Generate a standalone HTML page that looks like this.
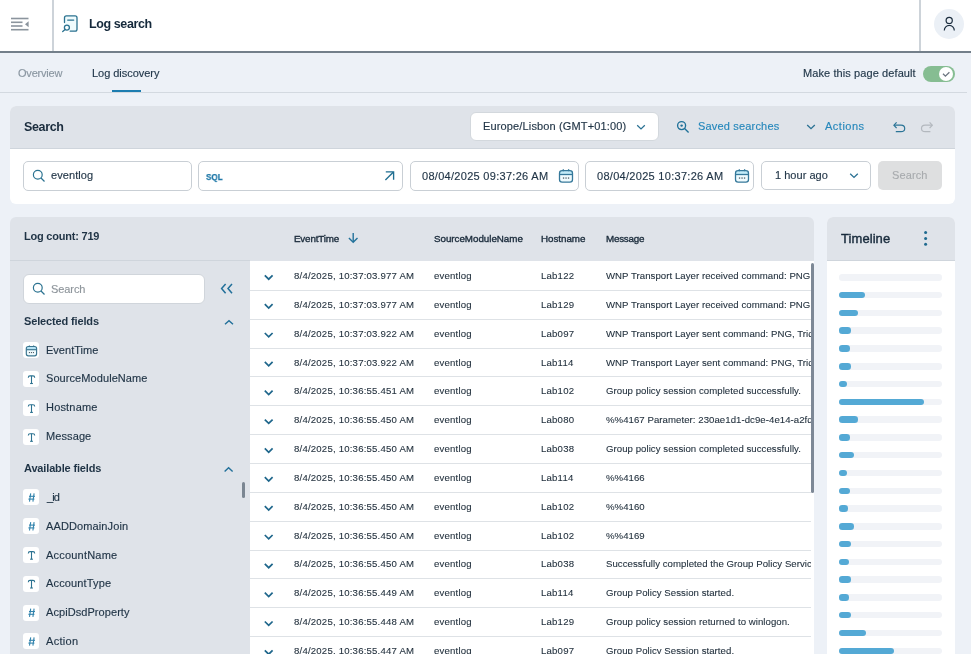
<!DOCTYPE html>
<html><head><meta charset="utf-8">
<style>
*{box-sizing:border-box;margin:0;padding:0}
html,body{width:971px;height:654px;overflow:hidden}
body{background:#edf1f7;font-family:"Liberation Sans",sans-serif;color:#1f3345;position:relative}
.a{position:absolute}
.t{position:absolute;white-space:nowrap;line-height:1;will-change:transform}
svg{position:absolute;left:0;top:0;overflow:visible}
</style></head><body>

<div class="a" style="left:0;top:0;width:971px;height:51px;background:#fff"></div>
<div class="a" style="left:0;top:51px;width:971px;height:2px;background:#737f8a"></div>
<div class="a" style="left:52px;top:0;width:2px;height:51px;background:#cdd3d9"></div>
<div class="a" style="left:919px;top:0;width:2px;height:51px;background:#cdd3d9"></div>
<div class="a" style="left:934px;top:9px;width:30px;height:30px;border-radius:50%;background:#ebf0f6"></div>
<div class="a" style="left:112px;top:90px;width:29px;height:2px;background:#1d7db0"></div>
<div class="a" style="left:0;top:92px;width:967px;height:1px;background:#d3d9e0"></div>
<div class="a" style="left:923px;top:66px;width:32px;height:16px;border-radius:8px;background:#86bd92"></div>
<div class="a" style="left:939px;top:67px;width:14px;height:14px;border-radius:50%;background:#fff"></div>
<div class="a" style="left:10px;top:106px;width:945px;height:98px;border-radius:6px;background:#fff;overflow:hidden"><div class="a" style="left:0;top:0;width:945px;height:43px;background:#dfe3e9;border-bottom:1px solid #cfd5dc"></div></div>
<div class="a" style="left:470px;top:112px;width:189px;height:29px;border-radius:6px;background:#fff;border:1px solid #d3d8dd"></div>
<div class="a" style="left:23px;top:161px;width:169px;height:30px;border:1px solid #c9cfd5;border-radius:5px"></div>
<div class="a" style="left:198px;top:161px;width:205px;height:30px;border:1px solid #c9cfd5;border-radius:5px"></div>
<div class="a" style="left:410px;top:161px;width:169px;height:30px;border:1px solid #c9cfd5;border-radius:5px"></div>
<div class="a" style="left:585px;top:161px;width:169px;height:30px;border:1px solid #c9cfd5;border-radius:5px"></div>
<div class="a" style="left:761px;top:161px;width:110px;height:29px;border:1px solid #c9cfd5;border-radius:5px"></div>
<div class="a" style="left:878px;top:161px;width:64px;height:29px;border-radius:5px;background:#dedfe0"></div>
<div class="a" style="left:10px;top:217px;width:804px;height:460px;border-radius:6px;background:#dfe3e9;overflow:hidden"><div class="a" style="left:0;top:43px;width:240px;height:1px;background:#cfd5dc"></div><div class="a" style="left:240px;top:44px;width:564px;height:420px;background:#fff"></div></div>
<div class="a" style="left:827px;top:217px;width:128px;height:460px;border-radius:6px;background:#fff;overflow:hidden"><div class="a" style="left:0;top:0;width:128px;height:44px;background:#dfe3e9;border-bottom:1px solid #cfd5dc"></div></div>
<div class="a" style="left:23px;top:274px;width:182px;height:30px;border-radius:6px;background:#fff;border:1px solid #d0d5db"></div>
<div class="a" style="left:23px;top:342.4px;width:16px;height:16px;border-radius:3px;background:#fff"></div>
<div class="a" style="left:23px;top:371.3px;width:16px;height:16px;border-radius:3px;background:#fff"></div>
<div class="a" style="left:23px;top:400.2px;width:16px;height:16px;border-radius:3px;background:#fff"></div>
<div class="a" style="left:23px;top:429.1px;width:16px;height:16px;border-radius:3px;background:#fff"></div>
<div class="a" style="left:23px;top:489.4px;width:16px;height:16px;border-radius:3px;background:#fff"></div>
<div class="a" style="left:23px;top:518.2px;width:16px;height:16px;border-radius:3px;background:#fff"></div>
<div class="a" style="left:23px;top:547.0px;width:16px;height:16px;border-radius:3px;background:#fff"></div>
<div class="a" style="left:23px;top:575.8px;width:16px;height:16px;border-radius:3px;background:#fff"></div>
<div class="a" style="left:23px;top:604.6px;width:16px;height:16px;border-radius:3px;background:#fff"></div>
<div class="a" style="left:23px;top:633.4px;width:16px;height:16px;border-radius:3px;background:#fff"></div>
<div class="a" style="left:242px;top:482px;width:3px;height:16px;border-radius:1.5px;background:#7b8692"></div>
<div class="a" style="left:250px;top:261px;width:561px;height:400px;overflow:hidden">
<div class="a" style="left:0;top:28.85px;width:561px;height:1px;background:#dee2e6"></div>
<div class="t" style="left:43.70px;top:9.97px;font-size:9.6px;letter-spacing:0.2px;color:#24323f;-webkit-text-stroke:0.1px #24323f">8/4/2025, 10:37:03.977 AM</div>
<div class="t" style="left:183.60px;top:9.97px;font-size:9.6px;letter-spacing:0.2px;color:#24323f;-webkit-text-stroke:0.1px #24323f">eventlog</div>
<div class="t" style="left:291.00px;top:9.97px;font-size:9.6px;letter-spacing:0.2px;color:#24323f;-webkit-text-stroke:0.1px #24323f">Lab122</div>
<div class="t" style="left:355.80px;top:9.97px;font-size:9.6px;letter-spacing:0.06px;color:#24323f;-webkit-text-stroke:0.1px #24323f">WNP Transport Layer received command: PNG, Trident 2</div>
<div class="a" style="left:0;top:57.70px;width:561px;height:1px;background:#dee2e6"></div>
<div class="t" style="left:43.70px;top:38.82px;font-size:9.6px;letter-spacing:0.2px;color:#24323f;-webkit-text-stroke:0.1px #24323f">8/4/2025, 10:37:03.977 AM</div>
<div class="t" style="left:183.60px;top:38.82px;font-size:9.6px;letter-spacing:0.2px;color:#24323f;-webkit-text-stroke:0.1px #24323f">eventlog</div>
<div class="t" style="left:291.00px;top:38.82px;font-size:9.6px;letter-spacing:0.2px;color:#24323f;-webkit-text-stroke:0.1px #24323f">Lab129</div>
<div class="t" style="left:355.80px;top:38.82px;font-size:9.6px;letter-spacing:0.06px;color:#24323f;-webkit-text-stroke:0.1px #24323f">WNP Transport Layer received command: PNG, Trident 2</div>
<div class="a" style="left:0;top:86.55px;width:561px;height:1px;background:#dee2e6"></div>
<div class="t" style="left:43.70px;top:67.67px;font-size:9.6px;letter-spacing:0.2px;color:#24323f;-webkit-text-stroke:0.1px #24323f">8/4/2025, 10:37:03.922 AM</div>
<div class="t" style="left:183.60px;top:67.67px;font-size:9.6px;letter-spacing:0.2px;color:#24323f;-webkit-text-stroke:0.1px #24323f">eventlog</div>
<div class="t" style="left:291.00px;top:67.67px;font-size:9.6px;letter-spacing:0.2px;color:#24323f;-webkit-text-stroke:0.1px #24323f">Lab097</div>
<div class="t" style="left:355.80px;top:67.67px;font-size:9.6px;letter-spacing:0.06px;color:#24323f;-webkit-text-stroke:0.1px #24323f">WNP Transport Layer sent command: PNG, Trident 2</div>
<div class="a" style="left:0;top:115.40px;width:561px;height:1px;background:#dee2e6"></div>
<div class="t" style="left:43.70px;top:96.52px;font-size:9.6px;letter-spacing:0.2px;color:#24323f;-webkit-text-stroke:0.1px #24323f">8/4/2025, 10:37:03.922 AM</div>
<div class="t" style="left:183.60px;top:96.52px;font-size:9.6px;letter-spacing:0.2px;color:#24323f;-webkit-text-stroke:0.1px #24323f">eventlog</div>
<div class="t" style="left:291.00px;top:96.52px;font-size:9.6px;letter-spacing:0.2px;color:#24323f;-webkit-text-stroke:0.1px #24323f">Lab114</div>
<div class="t" style="left:355.80px;top:96.52px;font-size:9.6px;letter-spacing:0.06px;color:#24323f;-webkit-text-stroke:0.1px #24323f">WNP Transport Layer sent command: PNG, Trident 2</div>
<div class="a" style="left:0;top:144.25px;width:561px;height:1px;background:#dee2e6"></div>
<div class="t" style="left:43.70px;top:125.37px;font-size:9.6px;letter-spacing:0.2px;color:#24323f;-webkit-text-stroke:0.1px #24323f">8/4/2025, 10:36:55.451 AM</div>
<div class="t" style="left:183.60px;top:125.37px;font-size:9.6px;letter-spacing:0.2px;color:#24323f;-webkit-text-stroke:0.1px #24323f">eventlog</div>
<div class="t" style="left:291.00px;top:125.37px;font-size:9.6px;letter-spacing:0.2px;color:#24323f;-webkit-text-stroke:0.1px #24323f">Lab102</div>
<div class="t" style="left:355.80px;top:125.37px;font-size:9.6px;letter-spacing:0.06px;color:#24323f;-webkit-text-stroke:0.1px #24323f">Group policy session completed successfully.</div>
<div class="a" style="left:0;top:173.10px;width:561px;height:1px;background:#dee2e6"></div>
<div class="t" style="left:43.70px;top:154.22px;font-size:9.6px;letter-spacing:0.2px;color:#24323f;-webkit-text-stroke:0.1px #24323f">8/4/2025, 10:36:55.450 AM</div>
<div class="t" style="left:183.60px;top:154.22px;font-size:9.6px;letter-spacing:0.2px;color:#24323f;-webkit-text-stroke:0.1px #24323f">eventlog</div>
<div class="t" style="left:291.00px;top:154.22px;font-size:9.6px;letter-spacing:0.2px;color:#24323f;-webkit-text-stroke:0.1px #24323f">Lab080</div>
<div class="t" style="left:355.80px;top:154.22px;font-size:9.6px;letter-spacing:0.06px;color:#24323f;-webkit-text-stroke:0.1px #24323f">%%4167 Parameter: 230ae1d1-dc9e-4e14-a2fd-0b1c2d3e</div>
<div class="a" style="left:0;top:201.95px;width:561px;height:1px;background:#dee2e6"></div>
<div class="t" style="left:43.70px;top:183.07px;font-size:9.6px;letter-spacing:0.2px;color:#24323f;-webkit-text-stroke:0.1px #24323f">8/4/2025, 10:36:55.450 AM</div>
<div class="t" style="left:183.60px;top:183.07px;font-size:9.6px;letter-spacing:0.2px;color:#24323f;-webkit-text-stroke:0.1px #24323f">eventlog</div>
<div class="t" style="left:291.00px;top:183.07px;font-size:9.6px;letter-spacing:0.2px;color:#24323f;-webkit-text-stroke:0.1px #24323f">Lab038</div>
<div class="t" style="left:355.80px;top:183.07px;font-size:9.6px;letter-spacing:0.06px;color:#24323f;-webkit-text-stroke:0.1px #24323f">Group policy session completed successfully.</div>
<div class="a" style="left:0;top:230.80px;width:561px;height:1px;background:#dee2e6"></div>
<div class="t" style="left:43.70px;top:211.92px;font-size:9.6px;letter-spacing:0.2px;color:#24323f;-webkit-text-stroke:0.1px #24323f">8/4/2025, 10:36:55.450 AM</div>
<div class="t" style="left:183.60px;top:211.92px;font-size:9.6px;letter-spacing:0.2px;color:#24323f;-webkit-text-stroke:0.1px #24323f">eventlog</div>
<div class="t" style="left:291.00px;top:211.92px;font-size:9.6px;letter-spacing:0.2px;color:#24323f;-webkit-text-stroke:0.1px #24323f">Lab114</div>
<div class="t" style="left:355.80px;top:211.92px;font-size:9.6px;letter-spacing:0.06px;color:#24323f;-webkit-text-stroke:0.1px #24323f">%%4166</div>
<div class="a" style="left:0;top:259.65px;width:561px;height:1px;background:#dee2e6"></div>
<div class="t" style="left:43.70px;top:240.77px;font-size:9.6px;letter-spacing:0.2px;color:#24323f;-webkit-text-stroke:0.1px #24323f">8/4/2025, 10:36:55.450 AM</div>
<div class="t" style="left:183.60px;top:240.77px;font-size:9.6px;letter-spacing:0.2px;color:#24323f;-webkit-text-stroke:0.1px #24323f">eventlog</div>
<div class="t" style="left:291.00px;top:240.77px;font-size:9.6px;letter-spacing:0.2px;color:#24323f;-webkit-text-stroke:0.1px #24323f">Lab102</div>
<div class="t" style="left:355.80px;top:240.77px;font-size:9.6px;letter-spacing:0.06px;color:#24323f;-webkit-text-stroke:0.1px #24323f">%%4160</div>
<div class="a" style="left:0;top:288.50px;width:561px;height:1px;background:#dee2e6"></div>
<div class="t" style="left:43.70px;top:269.62px;font-size:9.6px;letter-spacing:0.2px;color:#24323f;-webkit-text-stroke:0.1px #24323f">8/4/2025, 10:36:55.450 AM</div>
<div class="t" style="left:183.60px;top:269.62px;font-size:9.6px;letter-spacing:0.2px;color:#24323f;-webkit-text-stroke:0.1px #24323f">eventlog</div>
<div class="t" style="left:291.00px;top:269.62px;font-size:9.6px;letter-spacing:0.2px;color:#24323f;-webkit-text-stroke:0.1px #24323f">Lab102</div>
<div class="t" style="left:355.80px;top:269.62px;font-size:9.6px;letter-spacing:0.06px;color:#24323f;-webkit-text-stroke:0.1px #24323f">%%4169</div>
<div class="a" style="left:0;top:317.35px;width:561px;height:1px;background:#dee2e6"></div>
<div class="t" style="left:43.70px;top:298.47px;font-size:9.6px;letter-spacing:0.2px;color:#24323f;-webkit-text-stroke:0.1px #24323f">8/4/2025, 10:36:55.450 AM</div>
<div class="t" style="left:183.60px;top:298.47px;font-size:9.6px;letter-spacing:0.2px;color:#24323f;-webkit-text-stroke:0.1px #24323f">eventlog</div>
<div class="t" style="left:291.00px;top:298.47px;font-size:9.6px;letter-spacing:0.2px;color:#24323f;-webkit-text-stroke:0.1px #24323f">Lab038</div>
<div class="t" style="left:355.80px;top:298.47px;font-size:9.6px;letter-spacing:0.06px;color:#24323f;-webkit-text-stroke:0.1px #24323f">Successfully completed the Group Policy Service</div>
<div class="a" style="left:0;top:346.20px;width:561px;height:1px;background:#dee2e6"></div>
<div class="t" style="left:43.70px;top:327.32px;font-size:9.6px;letter-spacing:0.2px;color:#24323f;-webkit-text-stroke:0.1px #24323f">8/4/2025, 10:36:55.449 AM</div>
<div class="t" style="left:183.60px;top:327.32px;font-size:9.6px;letter-spacing:0.2px;color:#24323f;-webkit-text-stroke:0.1px #24323f">eventlog</div>
<div class="t" style="left:291.00px;top:327.32px;font-size:9.6px;letter-spacing:0.2px;color:#24323f;-webkit-text-stroke:0.1px #24323f">Lab114</div>
<div class="t" style="left:355.80px;top:327.32px;font-size:9.6px;letter-spacing:0.06px;color:#24323f;-webkit-text-stroke:0.1px #24323f">Group Policy Session started.</div>
<div class="a" style="left:0;top:375.05px;width:561px;height:1px;background:#dee2e6"></div>
<div class="t" style="left:43.70px;top:356.17px;font-size:9.6px;letter-spacing:0.2px;color:#24323f;-webkit-text-stroke:0.1px #24323f">8/4/2025, 10:36:55.448 AM</div>
<div class="t" style="left:183.60px;top:356.17px;font-size:9.6px;letter-spacing:0.2px;color:#24323f;-webkit-text-stroke:0.1px #24323f">eventlog</div>
<div class="t" style="left:291.00px;top:356.17px;font-size:9.6px;letter-spacing:0.2px;color:#24323f;-webkit-text-stroke:0.1px #24323f">Lab129</div>
<div class="t" style="left:355.80px;top:356.17px;font-size:9.6px;letter-spacing:0.06px;color:#24323f;-webkit-text-stroke:0.1px #24323f">Group policy session returned to winlogon.</div>
<div class="a" style="left:0;top:403.90px;width:561px;height:1px;background:#dee2e6"></div>
<div class="t" style="left:43.70px;top:385.02px;font-size:9.6px;letter-spacing:0.2px;color:#24323f;-webkit-text-stroke:0.1px #24323f">8/4/2025, 10:36:55.447 AM</div>
<div class="t" style="left:183.60px;top:385.02px;font-size:9.6px;letter-spacing:0.2px;color:#24323f;-webkit-text-stroke:0.1px #24323f">eventlog</div>
<div class="t" style="left:291.00px;top:385.02px;font-size:9.6px;letter-spacing:0.2px;color:#24323f;-webkit-text-stroke:0.1px #24323f">Lab097</div>
<div class="t" style="left:355.80px;top:385.02px;font-size:9.6px;letter-spacing:0.06px;color:#24323f;-webkit-text-stroke:0.1px #24323f">Group Policy Session started.</div>
</div>
<div class="a" style="left:811px;top:263px;width:3px;height:230px;border-radius:1.5px;background:#7d8896"></div>
<div class="a" style="left:839px;top:274.1px;width:103px;height:6.6px;border-radius:3.3px;background:#f1f3f7"></div>
<div class="a" style="left:839px;top:291.9px;width:103px;height:6.6px;border-radius:3.3px;background:#f1f3f7"></div>
<div class="a" style="left:839px;top:291.9px;width:26px;height:6.6px;border-radius:3.3px;background:#54a9d5"></div>
<div class="a" style="left:839px;top:309.7px;width:103px;height:6.6px;border-radius:3.3px;background:#f1f3f7"></div>
<div class="a" style="left:839px;top:309.7px;width:19px;height:6.6px;border-radius:3.3px;background:#54a9d5"></div>
<div class="a" style="left:839px;top:327.4px;width:103px;height:6.6px;border-radius:3.3px;background:#f1f3f7"></div>
<div class="a" style="left:839px;top:327.4px;width:12px;height:6.6px;border-radius:3.3px;background:#54a9d5"></div>
<div class="a" style="left:839px;top:345.2px;width:103px;height:6.6px;border-radius:3.3px;background:#f1f3f7"></div>
<div class="a" style="left:839px;top:345.2px;width:11px;height:6.6px;border-radius:3.3px;background:#54a9d5"></div>
<div class="a" style="left:839px;top:363.0px;width:103px;height:6.6px;border-radius:3.3px;background:#f1f3f7"></div>
<div class="a" style="left:839px;top:363.0px;width:12px;height:6.6px;border-radius:3.3px;background:#54a9d5"></div>
<div class="a" style="left:839px;top:380.8px;width:103px;height:6.6px;border-radius:3.3px;background:#f1f3f7"></div>
<div class="a" style="left:839px;top:380.8px;width:8px;height:6.6px;border-radius:3.3px;background:#54a9d5"></div>
<div class="a" style="left:839px;top:398.6px;width:103px;height:6.6px;border-radius:3.3px;background:#f1f3f7"></div>
<div class="a" style="left:839px;top:398.6px;width:85px;height:6.6px;border-radius:3.3px;background:#54a9d5"></div>
<div class="a" style="left:839px;top:416.3px;width:103px;height:6.6px;border-radius:3.3px;background:#f1f3f7"></div>
<div class="a" style="left:839px;top:416.3px;width:19px;height:6.6px;border-radius:3.3px;background:#54a9d5"></div>
<div class="a" style="left:839px;top:434.1px;width:103px;height:6.6px;border-radius:3.3px;background:#f1f3f7"></div>
<div class="a" style="left:839px;top:434.1px;width:11px;height:6.6px;border-radius:3.3px;background:#54a9d5"></div>
<div class="a" style="left:839px;top:451.9px;width:103px;height:6.6px;border-radius:3.3px;background:#f1f3f7"></div>
<div class="a" style="left:839px;top:451.9px;width:15px;height:6.6px;border-radius:3.3px;background:#54a9d5"></div>
<div class="a" style="left:839px;top:469.7px;width:103px;height:6.6px;border-radius:3.3px;background:#f1f3f7"></div>
<div class="a" style="left:839px;top:469.7px;width:8px;height:6.6px;border-radius:3.3px;background:#54a9d5"></div>
<div class="a" style="left:839px;top:487.5px;width:103px;height:6.6px;border-radius:3.3px;background:#f1f3f7"></div>
<div class="a" style="left:839px;top:487.5px;width:11px;height:6.6px;border-radius:3.3px;background:#54a9d5"></div>
<div class="a" style="left:839px;top:505.2px;width:103px;height:6.6px;border-radius:3.3px;background:#f1f3f7"></div>
<div class="a" style="left:839px;top:505.2px;width:9px;height:6.6px;border-radius:3.3px;background:#54a9d5"></div>
<div class="a" style="left:839px;top:523.0px;width:103px;height:6.6px;border-radius:3.3px;background:#f1f3f7"></div>
<div class="a" style="left:839px;top:523.0px;width:15px;height:6.6px;border-radius:3.3px;background:#54a9d5"></div>
<div class="a" style="left:839px;top:540.8px;width:103px;height:6.6px;border-radius:3.3px;background:#f1f3f7"></div>
<div class="a" style="left:839px;top:540.8px;width:12px;height:6.6px;border-radius:3.3px;background:#54a9d5"></div>
<div class="a" style="left:839px;top:558.6px;width:103px;height:6.6px;border-radius:3.3px;background:#f1f3f7"></div>
<div class="a" style="left:839px;top:558.6px;width:10px;height:6.6px;border-radius:3.3px;background:#54a9d5"></div>
<div class="a" style="left:839px;top:576.4px;width:103px;height:6.6px;border-radius:3.3px;background:#f1f3f7"></div>
<div class="a" style="left:839px;top:576.4px;width:12px;height:6.6px;border-radius:3.3px;background:#54a9d5"></div>
<div class="a" style="left:839px;top:594.1px;width:103px;height:6.6px;border-radius:3.3px;background:#f1f3f7"></div>
<div class="a" style="left:839px;top:594.1px;width:10px;height:6.6px;border-radius:3.3px;background:#54a9d5"></div>
<div class="a" style="left:839px;top:611.9px;width:103px;height:6.6px;border-radius:3.3px;background:#f1f3f7"></div>
<div class="a" style="left:839px;top:611.9px;width:12px;height:6.6px;border-radius:3.3px;background:#54a9d5"></div>
<div class="a" style="left:839px;top:629.7px;width:103px;height:6.6px;border-radius:3.3px;background:#f1f3f7"></div>
<div class="a" style="left:839px;top:629.7px;width:27px;height:6.6px;border-radius:3.3px;background:#54a9d5"></div>
<div class="a" style="left:839px;top:647.5px;width:103px;height:6.6px;border-radius:3.3px;background:#f1f3f7"></div>
<div class="a" style="left:839px;top:647.5px;width:55px;height:6.6px;border-radius:3.3px;background:#54a9d5"></div>
<div class="t" style="left:88.90px;top:18.02px;font-size:12.5px;color:#15293b;font-weight:700;letter-spacing:-0.395px">Log search</div>
<div class="t" style="left:18.10px;top:67.89px;font-size:11px;color:#8a96a1;-webkit-text-stroke:0.15px #8a96a1;letter-spacing:-0.200px">Overview</div>
<div class="t" style="left:92.40px;top:67.59px;font-size:11px;color:#1f3447;-webkit-text-stroke:0.15px #1f3447;letter-spacing:-0.039px">Log discovery</div>
<div class="t" style="left:803.20px;top:68.49px;font-size:11px;color:#23384a;-webkit-text-stroke:0.15px #23384a;letter-spacing:0.094px">Make this page default</div>
<div class="t" style="left:23.70px;top:121.02px;font-size:12.5px;color:#1a2c3d;font-weight:700;letter-spacing:-0.352px">Search</div>
<div class="t" style="left:482.70px;top:120.59px;font-size:11px;color:#1f3345;-webkit-text-stroke:0.15px #1f3345;letter-spacing:0.144px">Europe/Lisbon (GMT+01:00)</div>
<div class="t" style="left:697.70px;top:120.59px;font-size:11px;color:#2587bb;-webkit-text-stroke:0.15px #2587bb;letter-spacing:0.178px">Saved searches</div>
<div class="t" style="left:825.10px;top:120.69px;font-size:11px;color:#2587bb;-webkit-text-stroke:0.15px #2587bb;letter-spacing:0.505px">Actions</div>
<div class="t" style="left:51.10px;top:170.39px;font-size:11px;color:#1f3345;-webkit-text-stroke:0.15px #1f3345;letter-spacing:0.076px">eventlog</div>
<div class="t" style="left:206.00px;top:172.53px;font-size:9.3px;color:#1f78a8;font-weight:700;-webkit-text-stroke:0.25px #1f78a8;transform:scaleX(0.87);transform-origin:0 0">SQL</div>
<div class="t" style="left:421.60px;top:170.79px;font-size:11px;color:#1f3345;-webkit-text-stroke:0.15px #1f3345;letter-spacing:0.294px">08/04/2025 09:37:26 AM</div>
<div class="t" style="left:597.00px;top:170.79px;font-size:11px;color:#1f3345;-webkit-text-stroke:0.15px #1f3345;letter-spacing:0.294px">08/04/2025 10:37:26 AM</div>
<div class="t" style="left:774.70px;top:170.19px;font-size:11px;color:#1f3345;-webkit-text-stroke:0.15px #1f3345;letter-spacing:0.024px">1 hour ago</div>
<div class="t" style="left:891.90px;top:170.09px;font-size:11px;color:#a8abae;-webkit-text-stroke:0.15px #a8abae;letter-spacing:0.113px">Search</div>
<div class="t" style="left:23.70px;top:230.69px;font-size:11px;color:#1f3345;font-weight:700;letter-spacing:-0.216px">Log count: 719</div>
<div class="t" style="left:50.90px;top:283.89px;font-size:11px;color:#8e959b;-webkit-text-stroke:0.15px #8e959b;letter-spacing:-0.087px">Search</div>
<div class="t" style="left:23.60px;top:315.59px;font-size:11px;color:#1f3345;font-weight:700;letter-spacing:-0.144px">Selected fields</div>
<div class="t" style="left:23.50px;top:462.99px;font-size:11px;color:#1f3345;font-weight:700;letter-spacing:-0.151px">Available fields</div>
<div class="t" style="left:45.90px;top:344.59px;font-size:11px;color:#1f3345;-webkit-text-stroke:0.15px #1f3345;letter-spacing:0.019px">EventTime</div>
<div class="t" style="left:45.90px;top:373.34px;font-size:11px;color:#1f3345;-webkit-text-stroke:0.15px #1f3345;letter-spacing:0.076px">SourceModuleName</div>
<div class="t" style="left:45.90px;top:402.09px;font-size:11px;color:#1f3345;-webkit-text-stroke:0.15px #1f3345;letter-spacing:0.183px">Hostname</div>
<div class="t" style="left:45.90px;top:430.84px;font-size:11px;color:#1f3345;-webkit-text-stroke:0.15px #1f3345;letter-spacing:0.097px">Message</div>
<div class="t" style="left:46.60px;top:491.99px;font-size:11px;color:#1f3345;-webkit-text-stroke:0.15px #1f3345;letter-spacing:-0.881px">_id</div>
<div class="t" style="left:45.60px;top:520.79px;font-size:11px;color:#1f3345;-webkit-text-stroke:0.15px #1f3345;letter-spacing:0.118px">AADDomainJoin</div>
<div class="t" style="left:45.60px;top:549.59px;font-size:11px;color:#1f3345;-webkit-text-stroke:0.15px #1f3345;letter-spacing:0.203px">AccountName</div>
<div class="t" style="left:45.60px;top:578.39px;font-size:11px;color:#1f3345;-webkit-text-stroke:0.15px #1f3345;letter-spacing:0.152px">AccountType</div>
<div class="t" style="left:45.60px;top:607.19px;font-size:11px;color:#1f3345;-webkit-text-stroke:0.15px #1f3345;letter-spacing:0.069px">AcpiDsdProperty</div>
<div class="t" style="left:45.60px;top:635.99px;font-size:11px;color:#1f3345;-webkit-text-stroke:0.15px #1f3345;letter-spacing:0.309px">Action</div>
<div class="t" style="left:293.70px;top:233.80px;font-size:9.8px;color:#1a2b3b;-webkit-text-stroke:0.15px #1a2b3b;letter-spacing:-0.164px;-webkit-text-stroke:0.35px #1a2b3b">EventTime</div>
<div class="t" style="left:433.60px;top:233.80px;font-size:9.8px;color:#1a2b3b;-webkit-text-stroke:0.15px #1a2b3b;letter-spacing:-0.030px;-webkit-text-stroke:0.35px #1a2b3b">SourceModuleName</div>
<div class="t" style="left:541.10px;top:233.80px;font-size:9.8px;color:#1a2b3b;-webkit-text-stroke:0.15px #1a2b3b;letter-spacing:-0.029px;-webkit-text-stroke:0.35px #1a2b3b">Hostname</div>
<div class="t" style="left:605.90px;top:233.80px;font-size:9.8px;color:#1a2b3b;-webkit-text-stroke:0.15px #1a2b3b;letter-spacing:-0.217px;-webkit-text-stroke:0.35px #1a2b3b">Message</div>
<div class="t" style="left:840.50px;top:231.89px;font-size:13px;color:#172a3b;-webkit-text-stroke:0.15px #172a3b;letter-spacing:0.070px;-webkit-text-stroke:0.4px #172a3b">Timeline</div>
<svg width="971" height="654"><g stroke="#8b949d" stroke-width="1.6" fill="none"><line x1="11" y1="18.5" x2="28.5" y2="18.5"/><line x1="11" y1="22.3" x2="22.5" y2="22.3"/><line x1="11" y1="26" x2="22.5" y2="26"/><line x1="11" y1="29.7" x2="28.5" y2="29.7"/></g><path d="M28.6 21.3 L25 24.3 L28.6 27.3 Z" fill="#8b949d"/><path d="M64.5 17.6 Q64.5 15.9 66.2 15.9 H75.3 Q77 15.9 77 17.6 V29.5 Q77 31.2 75.3 31.2 H70.2 L68 29 Q66 25 64.5 22.7 Z" fill="#effbfd"/><g stroke="#2b7290" stroke-width="1.3" fill="none" stroke-linecap="round"><path d="M64.5 22.6 V17.8 Q64.5 15.9 66.4 15.9 H75.1 Q77 15.9 77 17.8 V29.3 Q77 31.2 75.1 31.2 H70.2"/><line x1="67.7" y1="20.1" x2="73.7" y2="20.1"/><circle cx="66.9" cy="27.6" r="2.5"/><line x1="65.1" y1="29.4" x2="62.7" y2="31.6"/></g><g stroke="#1b2d3e" stroke-width="1.2" fill="none"><circle cx="949.2" cy="20.4" r="3.1"/><path d="M944.3 30.4 A5 5 0 0 1 954.3 30.4"/></g><path d="M943 73.8 L945.4 76.2 L949.4 72.2" stroke="#6c7580" stroke-width="1.3" fill="none"/><path d="M637.2 125.2 L641 128.9 L644.8 125.2" stroke="#2a7193" stroke-width="1.25" fill="none"/><g stroke="#1f7199" stroke-width="1.35" fill="none"><circle cx="681.6" cy="125.6" r="4"/><line x1="684.6" y1="128.6" x2="688.6" y2="132.4"/></g><circle cx="681.6" cy="125.6" r="1.2" fill="#1f7199"/><path d="M807.2 125 L811 128.7 L814.8 125" stroke="#2a7193" stroke-width="1.3" fill="none"/><g stroke="#2b7496" stroke-width="1.2" fill="none"><path d="M896.6 122.3 L893.9 125.2 L896.6 128.1"/><path d="M894 125.2 H901 Q904.7 125.2 904.7 128.4 Q904.7 131.6 901 131.6 H895.8"/></g><g stroke="#b3b8be" stroke-width="1.2" fill="none"><path d="M929.6 122.3 L932.3 125.2 L929.6 128.1"/><path d="M932.2 125.2 H925.2 Q921.5 125.2 921.5 128.4 Q921.5 131.6 925.2 131.6 H930.4"/></g><g stroke="#2c7391" stroke-width="1.2" fill="none"><circle cx="37.8" cy="174.8" r="4.4"/><line x1="41" y1="178" x2="44.5" y2="181.5"/></g><g stroke="#1f6e91" stroke-width="1.35" fill="none"><line x1="385.4" y1="180" x2="393.2" y2="172.2"/><path d="M385.8 171.9 H393.6 V179.7"/></g><rect x="559.5" y="171" width="13" height="3.6" fill="#c2ebf8"/><rect x="559.5" y="174.6" width="13" height="7" fill="#effbfe"/><g stroke="#35789a" stroke-width="1.3" fill="none"><rect x="559.5" y="170.6" width="13" height="11.6" rx="2.6"/><line x1="559.5" y1="174.5" x2="572.5" y2="174.5"/><line x1="563.3" y1="169.2" x2="563.3" y2="171.2"/><line x1="568.6" y1="169.2" x2="568.6" y2="171.2"/></g><g fill="#4f5b66"><rect x="562.9" y="177.4" width="1.3" height="1.3"/><rect x="565.4" y="177.4" width="1.3" height="1.3"/><rect x="567.9" y="177.4" width="1.3" height="1.3"/></g><rect x="735.5" y="171" width="13" height="3.6" fill="#c2ebf8"/><rect x="735.5" y="174.6" width="13" height="7" fill="#effbfe"/><g stroke="#35789a" stroke-width="1.3" fill="none"><rect x="735.5" y="170.6" width="13" height="11.6" rx="2.6"/><line x1="735.5" y1="174.5" x2="748.5" y2="174.5"/><line x1="739.3" y1="169.2" x2="739.3" y2="171.2"/><line x1="744.6" y1="169.2" x2="744.6" y2="171.2"/></g><g fill="#4f5b66"><rect x="738.9" y="177.4" width="1.3" height="1.3"/><rect x="741.4" y="177.4" width="1.3" height="1.3"/><rect x="743.9" y="177.4" width="1.3" height="1.3"/></g><path d="M850.2 173.7 L854 177.4 L857.8 173.7" stroke="#2a7193" stroke-width="1.3" fill="none"/><g fill="#1f6a8f"><circle cx="925.6" cy="232.6" r="1.5"/><circle cx="925.6" cy="238.5" r="1.5"/><circle cx="925.6" cy="244.3" r="1.5"/></g><g stroke="#2c7391" stroke-width="1.2" fill="none"><circle cx="37.8" cy="287.8" r="4.4"/><line x1="41" y1="291" x2="44.5" y2="294.5"/></g><g stroke="#22709a" stroke-width="1.5" fill="none"><path d="M225.6 284 L221.6 288.6 L225.6 293.3"/><path d="M232 284 L228 288.6 L232 293.3"/></g><path d="M225 324.3 L229 320.7 L233 324.3" stroke="#22709a" stroke-width="1.4" fill="none"/><path d="M224.6 471.4 L228.6 467.8 L232.6 471.4" stroke="#22709a" stroke-width="1.4" fill="none"/><g stroke="#23729b" stroke-width="1.4" fill="none"><line x1="353.2" y1="233" x2="353.2" y2="242"/><path d="M348.9 237.9 L353.2 242.2 L357.5 237.9"/></g><rect x="26.3" y="346.80" width="10.3" height="3" fill="#b5e2f4"/><rect x="26.3" y="349.80" width="10.3" height="5.6" fill="#eefafd"/><g stroke="#3a7590" stroke-width="1.15" fill="none"><rect x="26.3" y="346.50" width="10.3" height="9.3" rx="2"/><line x1="26.3" y1="349.70" x2="36.6" y2="349.70"/><line x1="29.4" y1="345.40" x2="29.4" y2="347.00"/><line x1="33.6" y1="345.40" x2="33.6" y2="347.00"/></g><g fill="#555f68"><rect x="28.9" y="352.00" width="1.1" height="1.1"/><rect x="30.9" y="352.00" width="1.1" height="1.1"/><rect x="32.9" y="352.00" width="1.1" height="1.1"/></g><g stroke="#2d7391" stroke-width="1.1" fill="none"><path d="M28.3 377.70 Q28.3 375.90 30 375.90 H33 Q34.7 375.90 34.7 377.70"/><path d="M31.5 375.90 V383.50"/><path d="M30.1 383.50 H32.9"/></g><g stroke="#2d7391" stroke-width="1.1" fill="none"><path d="M28.3 406.60 Q28.3 404.80 30 404.80 H33 Q34.7 404.80 34.7 406.60"/><path d="M31.5 404.80 V412.40"/><path d="M30.1 412.40 H32.9"/></g><g stroke="#2d7391" stroke-width="1.1" fill="none"><path d="M28.3 435.50 Q28.3 433.70 30 433.70 H33 Q34.7 433.70 34.7 435.50"/><path d="M31.5 433.70 V441.30"/><path d="M30.1 441.30 H32.9"/></g><g stroke="#3384ad" stroke-width="1.1" fill="none"><path d="M30.7 493.40 L29.5 501.70"/><path d="M34.1 493.40 L32.9 501.70"/><path d="M29 496.30 H35"/><path d="M28.4 499.10 H34.4"/></g><g stroke="#3384ad" stroke-width="1.1" fill="none"><path d="M30.7 522.20 L29.5 530.50"/><path d="M34.1 522.20 L32.9 530.50"/><path d="M29 525.10 H35"/><path d="M28.4 527.90 H34.4"/></g><g stroke="#2d7391" stroke-width="1.1" fill="none"><path d="M28.3 553.40 Q28.3 551.60 30 551.60 H33 Q34.7 551.60 34.7 553.40"/><path d="M31.5 551.60 V559.20"/><path d="M30.1 559.20 H32.9"/></g><g stroke="#2d7391" stroke-width="1.1" fill="none"><path d="M28.3 582.20 Q28.3 580.40 30 580.40 H33 Q34.7 580.40 34.7 582.20"/><path d="M31.5 580.40 V588.00"/><path d="M30.1 588.00 H32.9"/></g><g stroke="#3384ad" stroke-width="1.1" fill="none"><path d="M30.7 608.60 L29.5 616.90"/><path d="M34.1 608.60 L32.9 616.90"/><path d="M29 611.50 H35"/><path d="M28.4 614.30 H34.4"/></g><g stroke="#3384ad" stroke-width="1.1" fill="none"><path d="M30.7 637.40 L29.5 645.70"/><path d="M34.1 637.40 L32.9 645.70"/><path d="M29 640.30 H35"/><path d="M28.4 643.10 H34.4"/></g><path d="M264.8 275.3 L268.7 279.2 L272.6 275.3" stroke="#1e668b" stroke-width="1.7" fill="none"/><path d="M264.8 304.2 L268.7 308.1 L272.6 304.2" stroke="#1e668b" stroke-width="1.7" fill="none"/><path d="M264.8 333.0 L268.7 336.9 L272.6 333.0" stroke="#1e668b" stroke-width="1.7" fill="none"/><path d="M264.8 361.9 L268.7 365.8 L272.6 361.9" stroke="#1e668b" stroke-width="1.7" fill="none"/><path d="M264.8 390.7 L268.7 394.6 L272.6 390.7" stroke="#1e668b" stroke-width="1.7" fill="none"/><path d="M264.8 419.6 L268.7 423.4 L272.6 419.6" stroke="#1e668b" stroke-width="1.7" fill="none"/><path d="M264.8 448.4 L268.7 452.3 L272.6 448.4" stroke="#1e668b" stroke-width="1.7" fill="none"/><path d="M264.8 477.2 L268.7 481.1 L272.6 477.2" stroke="#1e668b" stroke-width="1.7" fill="none"/><path d="M264.8 506.1 L268.7 510.0 L272.6 506.1" stroke="#1e668b" stroke-width="1.7" fill="none"/><path d="M264.8 535.0 L268.7 538.9 L272.6 535.0" stroke="#1e668b" stroke-width="1.7" fill="none"/><path d="M264.8 563.8 L268.7 567.7 L272.6 563.8" stroke="#1e668b" stroke-width="1.7" fill="none"/><path d="M264.8 592.7 L268.7 596.6 L272.6 592.7" stroke="#1e668b" stroke-width="1.7" fill="none"/><path d="M264.8 621.5 L268.7 625.4 L272.6 621.5" stroke="#1e668b" stroke-width="1.7" fill="none"/><path d="M264.8 650.4 L268.7 654.2 L272.6 650.4" stroke="#1e668b" stroke-width="1.7" fill="none"/></svg>
</body></html>
